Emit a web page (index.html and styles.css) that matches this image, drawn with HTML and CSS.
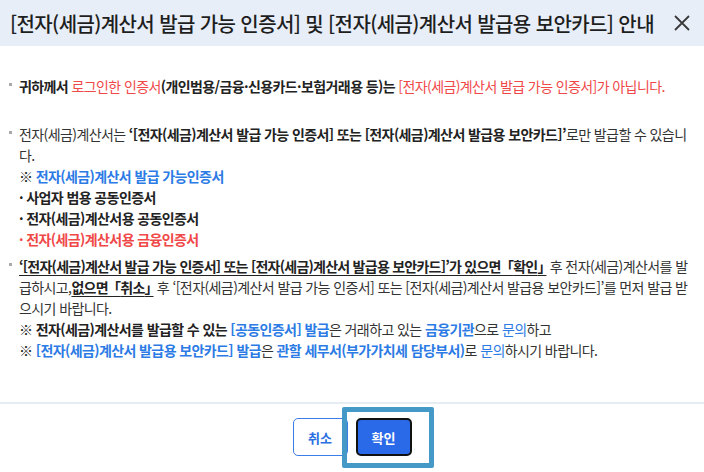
FILE: index.html
```html
<!DOCTYPE html>
<html lang="ko">
<head>
<meta charset="utf-8">
<link rel="stylesheet" href="styles.css">
</head>
<body>
<div class="dialog">
  <div class="header">
    <h1 class="title">[전자(세금)계산서 발급 가능 인증서] 및 [전자(세금)계산서 발급용 보안카드] 안내</h1>
    <button class="close" aria-label="닫기">
      <svg width="20" height="20" viewBox="0 0 20 20"><path d="M3 3 L17 17 M17 3 L3 17" stroke="#3a3a3a" stroke-width="1.8" fill="none"/></svg>
    </button>
  </div>
  <div class="body">
    <p class="item p1"><b>귀하께서 </b><span class="red">로그인한 인증서</span><b>(개인범용/금융·신용카드·보험거래용 등)는 </b><span class="red">[전자(세금)계산서 발급 가능 인증서]가 아닙니다.</span></p>
    <div class="item p2">
      <p>전자(세금)계산서는 <b>‘[전자(세금)계산서 발급 가능 인증서] 또는 [전자(세금)계산서 발급용 보안카드]’</b>로만 발급할 수 있습니다.</p>
      <p><b>※ </b><b class="blue">전자(세금)계산서 발급 가능인증서</b></p>
      <p class="sub"><b>· 사업자 범용 공동인증서</b></p>
      <p class="sub"><b>· 전자(세금)계산서용 공동인증서</b></p>
      <p class="sub"><b class="red">· 전자(세금)계산서용 금융인증서</b></p>
    </div>
    <div class="item p3">
      <p><b class="ul">‘[전자(세금)계산서 발급 가능 인증서] 또는 [전자(세금)계산서 발급용 보안카드]’가 있으면 <span class="ob">「</span>확인<span class="cb">」</span></b> 후 전자(세금)계산서를 발급하시고,<b class="ul">없으면 <span class="ob">「</span>취소<span class="cb">」</span></b> 후 ‘[전자(세금)계산서 발급 가능 인증서] 또는 [전자(세금)계산서 발급용 보안카드]’를 먼저 발급 받으시기 바랍니다.</p>
      <p><b>※ 전자(세금)계산서를 발급할 수 있는 </b><b class="blue">[공동인증서] 발급</b>은 거래하고 있는 <b class="blue">금융기관</b>으로 <span class="blue">문의</span>하고</p>
      <p><b>※ </b><b class="blue">[전자(세금)계산서 발급용 보안카드] 발급</b>은 <b class="blue">관할 세무서(부가가치세 담당부서)</b>로 <span class="blue">문의</span>하시기 바랍니다.</p>
    </div>
  </div>
  <div class="footer">
    <button class="btn btn-cancel">취소</button>
    <div class="ok-wrap">
      <button class="btn btn-ok">확인</button>
      <span class="focus-ring"></span>
    </div>
  </div>
</div>
</body>
</html>
```
FILE: styles.css
```css
* { box-sizing: border-box; }
html, body { margin: 0; padding: 0; background: #fff; }
body {
  font-family: "Noto Sans CJK KR", "Noto Sans", sans-serif;
  color: #333;
  width: 704px;
  height: 472px;
  overflow: hidden;
}
.dialog { display: flex; flex-direction: column; height: 472px; }
.header {
  height: 46px;
  background: #e8eef8;
  display: flex;
  align-items: center;
  justify-content: space-between;
  padding: 0 12px 0 10px;
}
.title {
  margin: 0;
  font-size: 20px;
  font-weight: 500;
  color: #1e1e1e;
  letter-spacing: -0.6px;
  white-space: nowrap;
}
.close {
  border: 0;
  background: transparent;
  padding: 0;
  width: 20px;
  height: 20px;
  display: flex;
}
.body {
  flex: 1;
  padding: 30px 12px 0 19px;
  font-size: 14px;
  line-height: 21px;
  letter-spacing: -0.6px;
}
.body p { margin: 0; }
.body b { font-weight: 700; color: #222; }
.item { position: relative; }
.item::before {
  content: "";
  position: absolute;
  left: -10px;
  top: 7px;
  width: 3px;
  height: 3px;
  background: #aaa;
}
.body .p1 { margin: 0 0 27px; }
.body .p2 { margin-bottom: 6px; }
.ob { margin-left: -4px; }
.cb { letter-spacing: -5px; }
.red, .body b.red { color: #f04848; }
.blue, .body b.blue { color: #2c7be5; }
.ul {
  text-decoration: underline;
  text-underline-offset: 3px;
  letter-spacing: -0.75px;
}
.footer {
  height: 70px;
  border-top: 2px solid #e6edf2;
  display: flex;
  justify-content: center;
  align-items: flex-start;
  gap: 8px;
  padding-top: 14px;
}
.btn {
  height: 38px;
  font-family: "Noto Sans CJK KR", sans-serif;
  font-size: 13px;
  font-weight: 700;
  border-radius: 5px;
  padding: 0;
}
.btn-cancel {
  width: 55px;
  background: #fff;
  border: 1px solid #3b7de9;
  color: #2b6fe0;
}
.ok-wrap { position: relative; }
.btn-ok {
  width: 56px;
  background: #2a6ae9;
  border: 2px solid #111;
  color: #fff;
}
.focus-ring {
  position: absolute;
  left: -14px;
  top: -11px;
  right: -22px;
  bottom: -12px;
  border: 5px solid #4599c6;
  border-radius: 2px;
  pointer-events: none;
}
```
